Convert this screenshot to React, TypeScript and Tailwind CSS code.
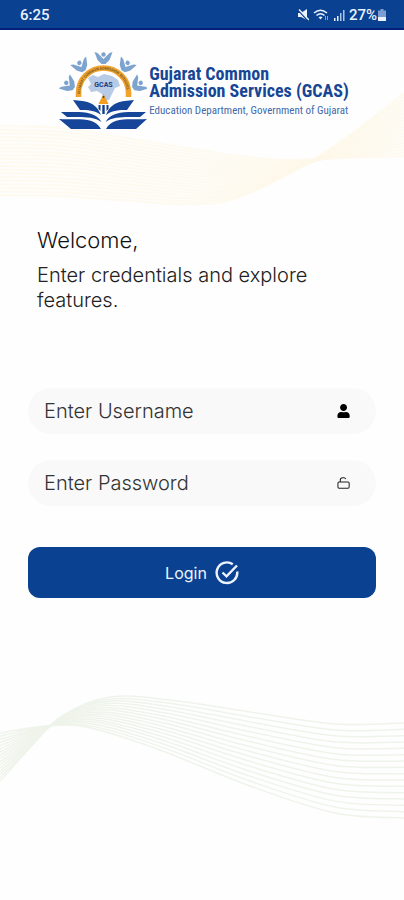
import { FaUser } from "react-icons/fa";

type Point = [number, number];

// Catmull-Rom through the points, written as cubic segments
function smoothPath(points: Point[]) {
  let d = `M${points[0][0]} ${points[0][1]}`;
  for (let i = 0; i < points.length - 1; i++) {
    const p0 = points[Math.max(i - 1, 0)];
    const p1 = points[i];
    const p2 = points[i + 1];
    const p3 = points[Math.min(i + 2, points.length - 1)];
    d += ` C${p1[0] + (p2[0] - p0[0]) / 6} ${p1[1] + (p2[1] - p0[1]) / 6} ${p2[0] - (p3[0] - p1[0]) / 6} ${p2[1] - (p3[1] - p1[1]) / 6} ${p2[0]} ${p2[1]}`;
  }
  return d;
}

function WaveLines({ from, to, count }: { from: Point[]; to: Point[]; count: number }) {
  return (
    <>
      {Array.from({ length: count }, (_, i) => {
        const t = i / (count - 1);
        const points = from.map(
          (p, j): Point => [p[0] + (to[j][0] - p[0]) * t, p[1] + (to[j][1] - p[1]) * t]
        );
        return <path key={i} d={smoothPath(points)} />;
      })}
    </>
  );
}

function TopWave() {
  return (
    <svg
      viewBox="0 0 404 150"
      preserveAspectRatio="none"
      className="absolute left-0 top-[60px] w-full h-[150px]"
      fill="none"
      stroke="#fdf8ea"
      strokeWidth="2.2"
      strokeOpacity="0.75"
      aria-hidden="true"
    >
      <WaveLines
        count={20}
        from={[[0, 66], [60, 68], [120, 77], [180, 87], [240, 96], [285, 100], [340, 98], [404, 96]]}
        to={[[0, 135], [60, 136], [120, 140], [180, 144], [222, 142], [265, 126], [330, 89], [404, 34]]}
      />
    </svg>
  );
}

function BottomWave() {
  return (
    <svg
      viewBox="0 0 404 140"
      preserveAspectRatio="none"
      className="w-full h-[140px] mt-[88px]"
      fill="none"
      stroke="#eff4eb"
      strokeWidth="1.5"
      aria-hidden="true"
    >
      <WaveLines
        count={16}
        from={[[0, 95], [30, 62], [62, 30], [110, 11], [170, 14], [250, 26], [335, 38], [404, 37]]}
        to={[[0, 47], [30, 42], [62, 39], [95, 43], [160, 64], [250, 100], [335, 127], [404, 132]]}
      />
    </svg>
  );
}

function Person({ transform }: { transform: string }) {
  return (
    <g transform={transform} fill="#7da3cf">
      <circle cx="0" cy="-3.5" r="2.2" />
      <path d="M-9 -6 L-6 -5 L0 1 L6 -5 L9 -6 L6 2 L2 6 H-2 L-6 2 Z" />
    </g>
  );
}

function Logo() {
  return (
    <svg viewBox="9 5 88 80" className="w-[88px] h-[80px] shrink-0" role="img" aria-label="GCAS logo">
      <Person transform="translate(53.5 13)" />
      <Person transform="translate(31 21) rotate(-28)" />
      <Person transform="translate(76 21) rotate(28)" />
      <Person transform="translate(19 40) rotate(-52)" />
      <Person transform="translate(88 40) rotate(52)" />
      <path
        d="M38 33 l5 -3 l5 2 l6 -3 l8 2 l6 4 l2 6 l-5 2 l-3 6 l-3 6 l-5 1 l-2 -7 l-5 -3 l-6 1 l-3 -5 l3 -3 z"
        fill="#b7cae6"
      />
      <path d="M28.5 52 V48 A25 25 0 0 1 78.5 48 V52" fill="none" stroke="#f1a32d" strokeWidth="5.6" />
      <path id="arch" d="M30 50 V48 A23.5 23.5 0 0 1 77 48 V50" fill="none" />
      <text fontSize="3.6" fill="#76592c" className="font-['Roboto'] font-bold">
        <textPath href="#arch" startOffset="1">
          GUJARAT COMMON ADMISSION SERVICES
        </textPath>
      </text>
      <text x="53.5" y="41.5" textAnchor="middle" fontSize="7" fill="#183c7c" className="font-['Roboto'] font-bold">
        GCAS
      </text>
      <path d="M53.5 49 L48.5 59 H58.5 Z" fill="#f59d1c" />
      <circle cx="53.5" cy="52" r="1" fill="#184896" />
      <path d="M48.5 60 h2 v6 l-2 -2 z M52.3 60 h2.4 v9 h-2.4 z M56.5 60 h2 v4 l-2 2 z" fill="#123c85" />
      <g fill="#15469a">
        <path d="M23 55 C36 56 46 57 51 70 C44 65 38 65 30 65 Z" />
        <path d="M84 55 C71 56 61 57 56 70 C63 65 69 65 77 65 Z" />
        <path d="M11 67 C29 67 45 65 51.5 77 C43 71 32 72 17 72 Z" />
        <path d="M96 67 C78 67 62 65 55.5 77 C64 71 75 72 90 72 Z" />
        <path d="M9 74 C28 75 44 71 51 84 H21 Z" />
        <path d="M97 74 C79 75 63 71 56 84 H86 Z" />
      </g>
    </svg>
  );
}

function StatusBar() {
  return (
    <div className="relative w-full h-[30px] pt-0.5 pl-5 pr-[18px] flex justify-between items-center bg-[#0a4190] border-b-2 border-[#04207c] text-[#eaf2ff] font-['Roboto',sans-serif] text-[15px] font-medium">
      <span>6:25</span>
      <div className="flex items-center gap-1">
        <svg viewBox="0 0 12 12" className="w-3 h-3" aria-hidden="true">
          <path d="M1 4 H4 L10 0 V11 L4 8 H1 Z" fill="currentColor" />
          <path d="M1 1 L11 12" stroke="#0a4190" strokeWidth="1.4" />
          <path d="M2 0.5 L12 11" stroke="currentColor" strokeWidth="1.4" />
        </svg>
        <svg viewBox="0 0 16 12" className="w-4 h-3" fill="none" stroke="currentColor" aria-hidden="true">
          <path d="M1 4 Q7.5 -1.5 14 4 M3.5 6.5 Q7.5 3 11.5 6.5" strokeWidth="1.5" />
          <path d="M5.5 8.3 Q7.5 6.8 9.5 8.3 L7.5 10.5 Z" fill="currentColor" stroke="none" />
          <path d="M12.5 7 V11 M14.5 7 V11" stroke="#7fa3d8" />
        </svg>
        <svg viewBox="0 0 12 12" className="w-3 h-3" aria-hidden="true">
          <path d="M1 9 h1.5 v3 h-1.5 z M4 7 h1.5 v5 h-1.5 z" fill="currentColor" />
          <path d="M7 4 h1.5 v8 h-1.5 z M10 1 h1.5 v11 h-1.5 z" fill="#a9c3e8" />
        </svg>
        <div className="flex items-center gap-px">
          <span>27%</span>
          <svg viewBox="0 0 8 12" className="w-2 h-3" aria-hidden="true">
            <path d="M2.5 0 h3 v1.5 h2.5 v7 h-8 v-7 h2.5 z" fill="#7b9dd2" />
            <path d="M0 8 h8 v4 h-8 z" fill="currentColor" />
          </svg>
        </div>
      </div>
    </div>
  );
}

function UnlockIcon() {
  return (
    <svg viewBox="0 0 14 14" className="w-[14px] h-[14px]" fill="none" stroke="#222" strokeWidth="1.1" aria-hidden="true">
      <rect x="1" y="6" width="12" height="6.5" rx="1.2" />
      <path d="M3.5 6 V4 A2.5 2.5 0 0 1 6 1.5 H7.5 A2 2 0 0 1 9.3 2.8" />
    </svg>
  );
}

function LoginIcon() {
  return (
    <svg viewBox="0 0 24 24" className="w-6 h-6" fill="none" stroke="currentColor" strokeWidth="2.4" aria-hidden="true">
      <path d="M17.8 3.2 A10.3 10.3 0 1 0 22.2 10.5" />
      <path d="M7.5 11.5 L11.5 15.3 L22 4.5" />
    </svg>
  );
}

function App() {
  return (
    <div className="relative w-full min-h-screen bg-[#fefefe] font-['Inter',sans-serif] font-light text-[#222]">
      <TopWave />
      <StatusBar />
      <header className="relative flex justify-center items-start gap-0.5 pt-5 pl-1">
        <Logo />
        <div className="pt-[15px] font-['Roboto_Condensed','Roboto',sans-serif] text-[#164695] whitespace-nowrap">
          <h1 className="text-[18px] leading-[17px] font-bold">
            Gujarat Common
            <br />
            Admission Services (GCAS)
          </h1>
          <p className="text-[11px] leading-3 mt-1.5 font-normal text-[#3f69ab]">
            Education Department, Government of Gujarat
          </p>
        </div>
      </header>
      <main className="relative px-7">
        <div className="px-[9px] pt-[96px]">
          <h2 className="text-[22px] leading-7 font-light text-[#111]">Welcome,</h2>
          <p className="text-[20px] leading-[25px] mt-[9px]">Enter credentials and explore features.</p>
        </div>
        <form className="mt-[75px]" onSubmit={(e) => e.preventDefault()}>
          <div className="w-full h-[46px] pl-4 pr-[26px] flex items-center bg-[#f9f9f9] rounded-full">
            <input
              type="text"
              aria-label="Username"
              placeholder="Enter Username"
              className="grow min-w-0 bg-transparent outline-none text-[20px] placeholder:text-[#333]"
            />
            <FaUser className="w-[14px] h-[14px] text-black" />
          </div>
          <div className="w-full h-[46px] mt-[26px] pl-4 pr-[26px] flex items-center bg-[#f9f9f9] rounded-full">
            <input
              type="password"
              aria-label="Password"
              placeholder="Enter Password"
              className="grow min-w-0 bg-transparent outline-none text-[20px] placeholder:text-[#333]"
            />
            <UnlockIcon />
          </div>
          <button
            type="submit"
            className="w-full h-[51px] mt-[41px] flex justify-center items-center gap-2 rounded-xl bg-[#0a4190] text-[#eef4ff] text-base font-normal cursor-pointer"
          >
            Login
            <LoginIcon />
          </button>
        </form>
      </main>
      <BottomWave />
    </div>
  );
}

export default App;
